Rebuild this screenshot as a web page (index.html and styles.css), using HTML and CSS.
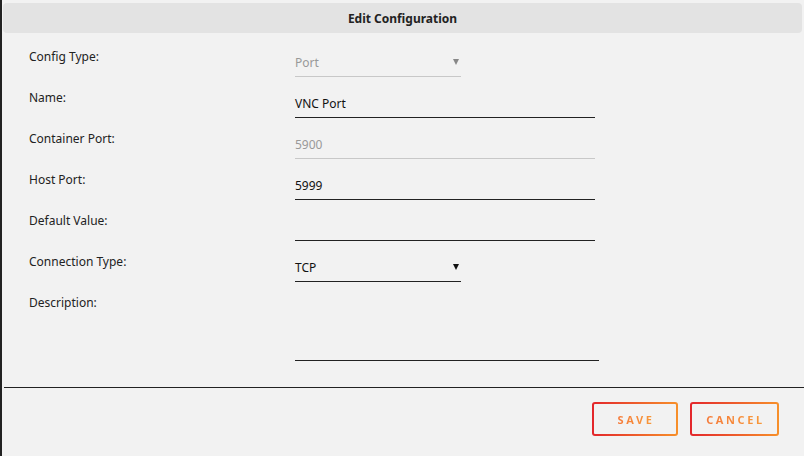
FILE: index.html
```
<!DOCTYPE html>
<html>
<head>
<meta charset="utf-8">
<link rel="stylesheet" href="styles.css">
</head>
<body>
<div class="dialog">
  <div class="header">Edit Configuration</div>
  <div class="form">
    <div class="label">Config Type:</div>
    <div class="field select disabled short"><span>Port</span><span class="arrow"></span></div>
    <div class="label">Name:</div>
    <div class="field">VNC Port</div>
    <div class="label">Container Port:</div>
    <div class="field disabled">5900</div>
    <div class="label">Host Port:</div>
    <div class="field">5999</div>
    <div class="label">Default Value:</div>
    <div class="field"></div>
    <div class="label">Connection Type:</div>
    <div class="field select short"><span>TCP</span><span class="arrow"></span></div>
    <div class="label">Description:</div>
    <div class="field textarea"></div>
  </div>
  <div class="separator"></div>
  <div class="actions">
    <button class="btn save"><span>SAVE</span></button>
    <button class="btn cancel"><span>CANCEL</span></button>
  </div>
</div>
</body>
</html>
```
FILE: styles.css
```
html, body {
  margin: 0;
  padding: 0;
  background: #f2f2f2;
}
body {
  font-family: "Noto Sans", "Open Sans", sans-serif;
  font-size: 12px;
  color: #222;
}
.dialog {
  border-left: 2px solid #222;
  min-height: 456px;
  box-sizing: border-box;
  padding-top: 3px;
}
.header {
  margin: 0 2px 0 1px;
  height: 30px;
  background: #e3e3e3;
  border-radius: 4px;
  display: flex;
  align-items: center;
  justify-content: center;
  font-weight: 700;
  font-size: 12px;
  color: #222;
}
.form {
  display: grid;
  grid-template-columns: 266px auto;
  grid-template-rows: repeat(6, 41px) auto;
  padding: 15px 0 0 27px;
  justify-content: start;
}
.label {
  margin-top: 1px;
  line-height: 16px;
  color: #222;
}
.field {
  box-sizing: border-box;
  width: 300px;
  height: 29px;
  padding: 7px 0 5px 0;
  line-height: 16px;
  border-bottom: 1px solid #222;
  color: #111;
}
.field.disabled {
  color: #999;
  border-bottom-color: #c8c8c8;
}
.field.short {
  width: 166px;
}
.select {
  display: flex;
  justify-content: space-between;
  align-items: center;
  padding-right: 2px;
}
.arrow {
  width: 0;
  height: 0;
  border-left: 3.5px solid transparent;
  border-right: 3.5px solid transparent;
  border-top: 6px solid #111;
  margin-top: -3px;
}
.disabled .arrow {
  border-top-color: #888;
}
.textarea {
  width: 304px;
  height: 67px;
}
.separator {
  margin: 26px 0 0 2px;
  height: 1px;
  background: #222;
}
.actions {
  display: flex;
  justify-content: flex-end;
  gap: 12px;
  padding: 14px 25px 0 0;
}
.btn {
  box-sizing: border-box;
  height: 34px;
  border: 2px solid transparent;
  border-radius: 3px;
  background: linear-gradient(#f2f2f2, #f2f2f2) padding-box,
              linear-gradient(90deg, #e3262c, #f7902a) border-box;
  font-family: "Noto Sans", sans-serif;
  font-weight: 700;
  font-size: 11px;
  letter-spacing: 2.6px;
  padding: 0 0 0 2px;
  cursor: pointer;
}
.btn span {
  background: linear-gradient(90deg, #f57a3a, #f89a3a);
  -webkit-background-clip: text;
  background-clip: text;
  color: transparent;
}
.save { width: 86px; }
.cancel { width: 89px; }
```
